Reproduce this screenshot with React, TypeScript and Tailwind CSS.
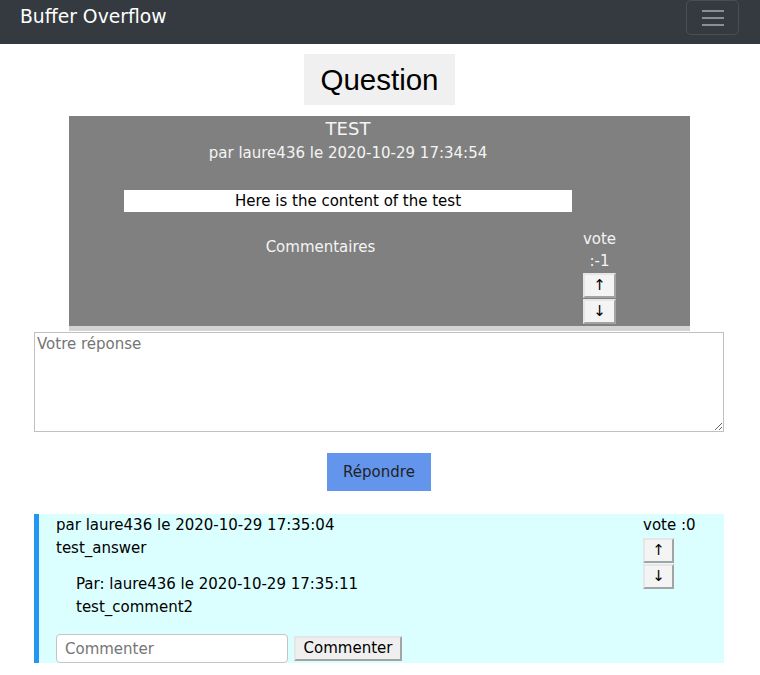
const voteBtn =
  "flex items-center justify-center bg-[#f4f4f4] text-black border-2 border-t-[#e6e6e6] border-l-[#e6e6e6] border-r-[#a3a3a3] border-b-[#a3a3a3] leading-none";

function VoteButtons({ w }: { w: string }) {
  return (
    <div className="flex flex-col gap-[1px]">
      <button className={`${voteBtn} ${w} h-[25px]`}>↑</button>
      <button className={`${voteBtn} ${w} h-[25px]`}>↓</button>
    </div>
  );
}

export default function App() {
  return (
    <div className="min-h-screen bg-white font-['DejaVu_Sans',sans-serif] text-[15px] leading-[1.5] text-black">
      <nav className="h-[44px] bg-[#343a40] flex justify-between pl-[20px] pr-[21px]">
        <span className="text-[18.75px] text-white pt-[3px]">Buffer Overflow</span>
        <button className="w-[53px] h-[35px] border border-white/10 rounded-[5px] flex flex-col items-center justify-center gap-[5px]">
          <span className="block w-[22px] h-[2px] bg-[#8b8e92]" />
          <span className="block w-[22px] h-[2px] bg-[#8b8e92]" />
          <span className="block w-[22px] h-[2px] bg-[#8b8e92]" />
        </button>
      </nav>

      <div className="flex justify-center mt-[10px] pr-[1px]">
        <h1 className="bg-[#f0f0f0] h-[51px] px-[16px] flex items-center font-['Liberation_Sans',Arial,sans-serif] text-[29.5px] leading-none">
          Question
        </h1>
      </div>

      <div className="ml-[69px] w-[621px] mt-[11px]">
        <div className="bg-[#808080] h-[210px] text-[#f4f4f4]">
          <div className="w-[558px]">
            <div className="text-center text-[18px] leading-[24px] pt-[1px]">TEST</div>
            <div className="text-center leading-[22px] mt-[1px]">par laure436 le 2020-10-29 17:34:54</div>
            <div className="mt-[26px] ml-[55px] w-[448px] h-[22px] leading-[22px] bg-white text-black text-center">
              Here is the content of the test
            </div>
            <div className="flex mt-[16px]">
              <div className="w-[503px] text-center pt-[8px] leading-[22px]">Commentaires</div>
              <div className="w-[55px] flex justify-center">
                <div className="w-[33px] flex flex-col items-center leading-[22px]">
                  <span className="whitespace-nowrap">vote</span>
                  <span>:-1</span>
                  <div className="mt-[1px]">
                    <VoteButtons w="w-[33px]" />
                  </div>
                </div>
              </div>
            </div>
          </div>
        </div>
        <div className="h-[5px] bg-[#d3d3d3]" />
      </div>

      <textarea
        className="block ml-[34px] mt-[1px] w-[690px] h-[100px] border border-[#c0c0c0] px-[2px] py-0 placeholder:text-[#757575] outline-none"
        placeholder="Votre réponse"
      />

      <div className="flex justify-center mt-[21px] pr-[2px]">
        <button className="w-[104px] h-[38px] bg-[#6495ed] text-[#222]">Répondre</button>
      </div>

      <div className="ml-[34px] mt-[23px] w-[690px] h-[149px] bg-[#dbffff] border-l-[5px] border-[#2196f3] flex">
        <div className="flex-1 pl-[17px]">
          <div>par laure436 le 2020-10-29 17:35:04</div>
          <div>test_answer</div>
          <div className="ml-[20px] mt-[14px]">
            <div>Par: laure436 le 2020-10-29 17:35:11</div>
            <div>test_comment2</div>
          </div>
          <div className="flex items-center mt-[16px]">
            <input
              className="w-[232px] h-[29px] rounded-[4px] border border-[#c4c4c4] bg-white px-[8px] placeholder:text-[#757575] outline-none"
              placeholder="Commenter"
            />
            <button className="ml-[6px] w-[108px] h-[25px] bg-[#efefef] border-2 border-t-[#e6e6e6] border-l-[#e6e6e6] border-r-[#a3a3a3] border-b-[#a3a3a3] leading-none">
              Commenter
            </button>
          </div>
        </div>
        <div className="w-[81px]">
          <div className="whitespace-nowrap">vote :0</div>
          <div className="mt-[1px]">
            <VoteButtons w="w-[31px]" />
          </div>
        </div>
      </div>
    </div>
  );
}
